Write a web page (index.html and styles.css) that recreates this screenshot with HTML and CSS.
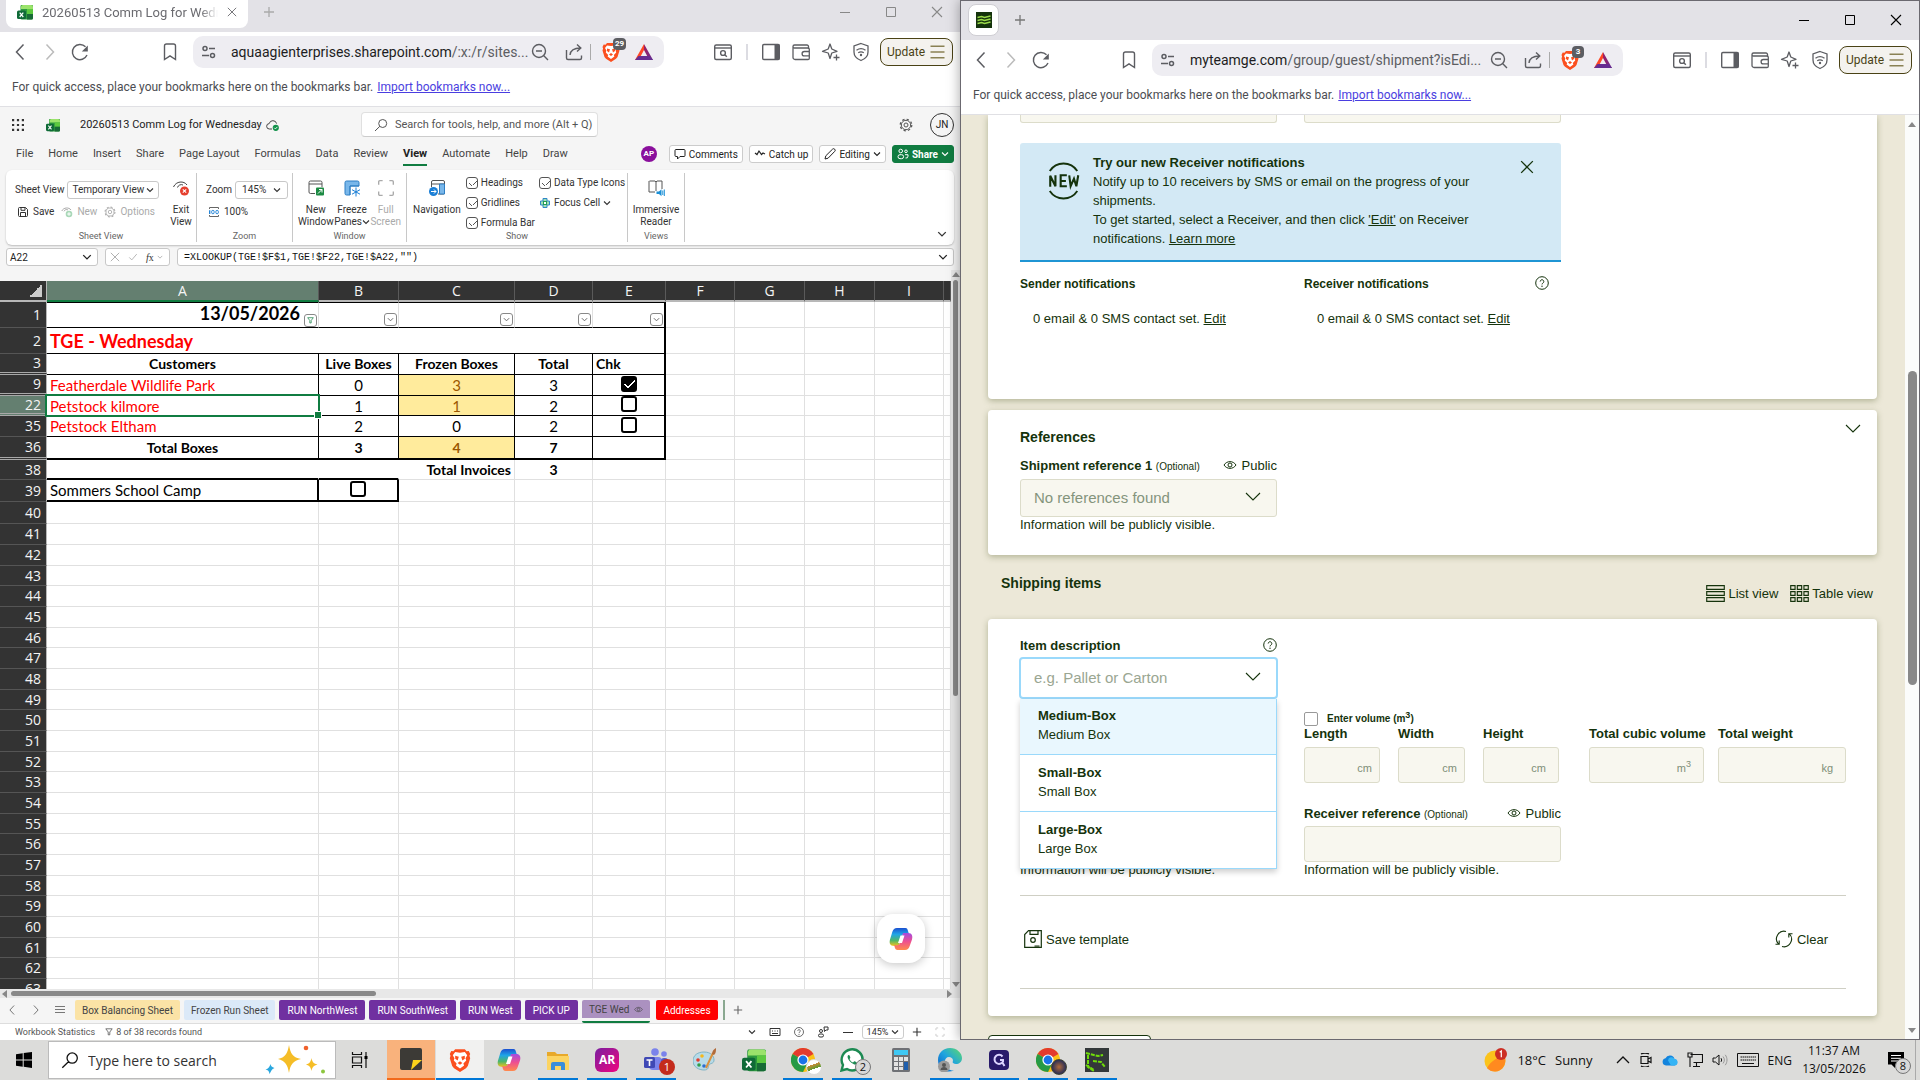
FILE: index.html
```html
<!DOCTYPE html>
<html lang="en">
<head>
<meta charset="utf-8">
<title>Desktop</title>
<link rel="stylesheet" href="styles.css">
</head>
<body>
<svg class="defs" aria-hidden="true">
  <defs>
    <linearGradient id="g-blue" x1="0" y1="0" x2="0" y2="1"><stop offset="0" stop-color="#1b4fd0"/><stop offset=".35" stop-color="#1fa5e8"/><stop offset=".7" stop-color="#4fb768"/><stop offset="1" stop-color="#f5c21b"/></linearGradient>
    <linearGradient id="g-pink" x1="0" y1="0" x2="0" y2="1"><stop offset="0" stop-color="#a34be0"/><stop offset=".5" stop-color="#ee5090"/><stop offset="1" stop-color="#ff8a4c"/></linearGradient>
    <linearGradient id="g-edge" x1="0" y1="1" x2="1" y2="0"><stop offset="0" stop-color="#0b57c2"/><stop offset=".5" stop-color="#1fa4e0"/><stop offset="1" stop-color="#5edb6a"/></linearGradient>
    <linearGradient id="g-bat" x1="0" y1="0" x2="1" y2="0"><stop offset="0" stop-color="#ff4724"/><stop offset=".5" stop-color="#ff4724"/><stop offset=".5" stop-color="#9e1f63"/><stop offset="1" stop-color="#662d91"/></linearGradient>
  </defs>
  <symbol id="i-excel" viewBox="0 0 16 16"><path d="M4 1h11a1 1 0 0 1 1 1v12a1.500 1.500 0 0 1-1.500 1.500H5A1.500 1.500 0 0 1 3.500 14V2z" fill="#2d9a3f"/><path d="M4 3a2 2 0 0 1 2-2h8a2 2 0 0 1 2 2v2H4z" fill="#9be36b"/><path d="M10 5h6v5h-6z" fill="#5cc93f"/><path d="M10 10h6v4a1.500 1.500 0 0 1-1.500 1.500H10z" fill="#176b36"/><rect y="6.500" width="9" height="8.500" rx="1.500" fill="#0f6a37"/><path d="M2.700 8.700l3.600 4.300M6.300 8.700L2.700 13" stroke="#fff" stroke-width="1.200"/></symbol>
  <symbol id="i-close" viewBox="0 0 12 12"><path d="M1 1l10 10M11 1L1 11" fill="none" stroke="currentColor" stroke-width="1.100"/></symbol>
  <symbol id="i-plus" viewBox="0 0 12 12"><path d="M6 1v10M1 6h10" fill="none" stroke="currentColor" stroke-width="1.300"/></symbol>
  <symbol id="i-minus" viewBox="0 0 12 12"><path d="M1 6.500h10" fill="none" stroke="currentColor" stroke-width="1"/></symbol>
  <symbol id="i-max" viewBox="0 0 12 12"><path d="M1.500 1.500h9v9h-9z" fill="none" stroke="currentColor" stroke-width="1"/></symbol>
  <symbol id="i-back" viewBox="0 0 20 20"><path d="M13.500 2.500L6.500 10l7 7.500" fill="none" stroke="currentColor" stroke-width="1.500"/></symbol>
  <symbol id="i-fwd" viewBox="0 0 20 20"><path d="M6.500 2.500l7 7.500-7 7.500" fill="none" stroke="currentColor" stroke-width="1.500"/></symbol>
  <symbol id="i-reload" viewBox="0 0 20 20"><path d="M15.500 4.800A7.600 7.600 0 1 0 17 13" fill="none" stroke="currentColor" stroke-width="1.400"/><path d="M17.800 3.500v6h-6z" fill="currentColor"/></symbol>
  <symbol id="i-bookmark" viewBox="0 0 20 20"><path d="M4.500 4a2 2 0 0 1 2-2h7a2 2 0 0 1 2 2v13.500L10 13.800l-5.500 3.700z" fill="none" stroke="currentColor" stroke-width="1.400"/></symbol>
  <symbol id="i-tune" viewBox="0 0 20 20"><g fill="none" stroke="currentColor" stroke-width="1.500"><circle cx="6" cy="6.500" r="2"/><path d="M10 6.500h6M3 13.500h7"/><circle cx="13.500" cy="13.500" r="2"/></g></symbol>
  <symbol id="i-zoomout" viewBox="0 0 20 20"><g fill="none" stroke="currentColor" stroke-width="1.400"><circle cx="9" cy="9" r="6.500"/><path d="M13.800 13.800L18 18M6 9h6"/></g></symbol>
  <symbol id="i-share" viewBox="0 0 20 20"><path d="M2.500 8v8a1.500 1.500 0 0 0 1.500 1.500h12a1.500 1.500 0 0 0 1.500-1.500v-2.500M6 13c.5-4.500 4-7 10.500-7M13 2.500L16.800 6 13 9.500" fill="none" stroke="currentColor" stroke-width="1.400"/></symbol>
  <symbol id="i-brave" viewBox="0 0 20 20"><path d="M6 1h8l1.500 1.700 1.800-.2 1.200 2.500-.6 1.500.6 2-2 6.500-1.500 1.800L10 20l-5-3.200-1.500-1.800-2-6.500.6-2L1.500 5l1.200-2.500 1.800.2z" fill="#fb4f1f"/><path d="M10 4l4-.6 2 2.600-1.400 2.600.6 1.800-2.400 2.600.6 1.500L10 17l-3.400-2.500.6-1.500-2.400-2.600.6-1.800L4 6l2-2.600z" fill="#fff"/><path d="M6 6.500l3 .7-1 3.300-2-1.500zM14 6.500l-3 .7 1 3.300 2-1.500zM10 11l2 1.500-2 1.500-2-1.500z" fill="#fb4f1f"/></symbol>
  <symbol id="i-bat" viewBox="0 0 20 20"><path d="M10 2L1 18h18zM10 8l3.200 6H6.800z" fill="url(#g-bat)" fill-rule="evenodd"/><path d="M1 18l3.500-4h11L19 18z" fill="#662d91"/></symbol>
  <symbol id="i-winsearch" viewBox="0 0 20 20"><g fill="none" stroke="currentColor" stroke-width="1.400"><rect x="1.700" y="3" width="16.600" height="14.500" rx="1.500"/><path d="M1.700 6h16.600"/><circle cx="10" cy="11" r="2.400"/><path d="M11.800 12.800l2 2"/></g></symbol>
  <symbol id="i-sidebar" viewBox="0 0 20 20"><rect x="1.700" y="2.500" width="16.600" height="15" rx="1.200" fill="none" stroke="currentColor" stroke-width="1.400"/><path d="M13.500 2.500h5v15h-5z" fill="currentColor"/></symbol>
  <symbol id="i-wallet" viewBox="0 0 20 20"><path d="M17.500 7V4.500A1.500 1.500 0 0 0 16 3H3.500a1.500 1.500 0 0 0 0 3H17a1.300 1.300 0 0 1 1.300 1.300v8.900A1.300 1.300 0 0 1 17 17.500H4a2 2 0 0 1-2-2v-11M18.300 9.500h-5a2.200 2.200 0 0 0 0 4.400h5" fill="none" stroke="currentColor" stroke-width="1.300"/></symbol>
  <symbol id="i-sparkle" viewBox="0 0 20 20"><path d="M9 2l1.800 5L16 9.300 10.800 11 9 16.500 7.200 11 1.500 9.300 7.200 7zM15.500 12.500v6M12.500 15.500h6" fill="none" stroke="currentColor" stroke-width="1.300" stroke-linejoin="round"/></symbol>
  <symbol id="i-vpn" viewBox="0 0 20 20"><path d="M10 1.500l7 2.500v6c0 4-3 7-7 8.500C6 17 3 14 3 10V4zM5.500 8.200c2.800-2 6.200-2 9 0M7.200 10.800c1.800-1.200 3.800-1.200 5.600 0" fill="none" stroke="currentColor" stroke-width="1.300"/><circle cx="10" cy="13" r="1.200" fill="currentColor"/></symbol>
  <symbol id="i-burger" viewBox="0 0 18 16"><path d="M1 1.500h16M1 8h16M1 14.500h16" stroke="#8a8154" stroke-width="1.700"/></symbol>
  <symbol id="i-waffle" viewBox="0 0 12 12"><path d="M0 0h2.200v2.200H0zM4.900 0h2.200v2.200H4.900zM9.800 0H12v2.200H9.800zM0 4.900h2.200v2.200H0zM4.900 4.900h2.200v2.200H4.900zM9.800 4.900H12v2.200H9.800zM0 9.800h2.200V12H0zM4.900 9.800h2.200V12H4.900zM9.800 9.800H12V12H9.800z" fill="#333"/></symbol>
  <symbol id="i-cloud" viewBox="0 0 14 14"><path d="M6 11H3.500a2.700 2.700 0 0 1-.3-5.400 3.800 3.800 0 0 1 7.400 0" fill="none" stroke="#444"/><circle cx="9.800" cy="9.800" r="3.100" fill="#13924b"/><path d="M8.300 9.800l1.100 1.100 2-2" fill="none" stroke="#fff" stroke-width=".9"/></symbol>
  <symbol id="i-search" viewBox="0 0 14 14"><path d="M8.700 1.500a4 4 0 1 1 0 8 4 4 0 0 1 0-8zM5.800 8.300L1 13" fill="none" stroke="currentColor"/></symbol>
  <symbol id="i-gear" viewBox="0 0 14 14"><g fill="none" stroke="currentColor"><circle cx="7" cy="7" r="2"/><circle cx="7" cy="7" r="4.700"/><circle cx="7" cy="7" r="5.800" stroke-dasharray="2.300 2.250" stroke-width="1.200"/></g></symbol>
  <symbol id="i-comment" viewBox="0 0 12 12"><path d="M2 1.500h8a1 1 0 0 1 1 1v5a1 1 0 0 1-1 1H6L3.500 11V8.500H2a1 1 0 0 1-1-1v-5a1 1 0 0 1 1-1z" fill="none" stroke="currentColor"/></symbol>
  <symbol id="i-wave" viewBox="0 0 12 12"><path d="M1 5l2 1.500L5 3l2.500 3.500L9 5l2 1" fill="none" stroke="currentColor" stroke-width="1.200"/></symbol>
  <symbol id="i-pen" viewBox="0 0 12 12"><path d="M1 11l.8-3.200L8.500 1.200a1.400 1.400 0 0 1 2.200 2.200L4.100 10.200z" fill="none" stroke="currentColor"/></symbol>
  <symbol id="i-people" viewBox="0 0 12 12"><g fill="none" stroke="currentColor"><circle cx="3.700" cy="3" r="1.800"/><circle cx="9" cy="3.300" r="1.300"/><rect x="1" y="6.700" width="5.600" height="4" rx="2"/><path d="M8 6.700h3v1.500a2 2 0 0 1-2.500 1.800"/></g></symbol>
  <symbol id="i-chev" viewBox="0 0 8 8"><path d="M1 2.500l3 3 3-3" fill="none" stroke="currentColor" stroke-width="1.100"/></symbol>
  <symbol id="i-chev-thin" viewBox="0 0 18 18"><path d="M2 5l7 7L16 5" fill="none" stroke="currentColor" stroke-width="1.100"/></symbol>
  <symbol id="i-save" viewBox="0 0 12 12"><path d="M1.500 2.500a1 1 0 0 1 1-1h6l2 2v6a1 1 0 0 1-1 1h-7a1 1 0 0 1-1-1zM4 1.500v2.800h4V1.500M3.500 10.500V6.500h5v4" fill="none" stroke="currentColor"/></symbol>
  <symbol id="i-neweye" viewBox="0 0 12 12"><path d="M.8 5C2.500 1.300 8 1 10 4M3 5.300A2.700 2.700 0 0 1 7 4" fill="none" stroke="#aaa"/><circle cx="8" cy="8" r="3.300" fill="#a9d8b8"/><path d="M8 6.200v3.600M6.200 8h3.600" stroke="#fff"/></symbol>
  <symbol id="i-exit" viewBox="0 0 18 18"><path d="M1.500 8C4 2 12 1.500 15 6M5.500 8.500A4 4 0 0 1 11 6" fill="none" stroke="#444"/><circle cx="12.500" cy="12" r="4.500" fill="#e5402f"/><path d="M10.800 10.300l3.400 3.400M14.200 10.300l-3.400 3.400" stroke="#fff" stroke-width="1.100"/></symbol>
  <symbol id="i-hundred" viewBox="0 0 12 12"><path d="M1.500 3V1.500h9V3M1.500 9v1.500h9V9" fill="none" stroke="#666"/><path d="M1.700 4.200v3.800" stroke="#1b7fd6" stroke-width="1.300"/><rect x="3.700" y="4.400" width="2.400" height="3.300" rx="1" fill="none" stroke="#1b7fd6"/><rect x="7.900" y="4.400" width="2.400" height="3.300" rx="1" fill="none" stroke="#1b7fd6"/></symbol>
  <symbol id="i-newwin" viewBox="0 0 18 18"><path d="M8 14.500H3.500a1.500 1.500 0 0 1-1.500-1.500V3.500A1.500 1.500 0 0 1 3.500 2h10A1.500 1.500 0 0 1 15 3.500V8M2 5h13" fill="none" stroke="#555"/><rect x="9" y="8.500" width="8" height="8" rx="1" fill="#1c8a43"/><path d="M11 14.500l4-4M12 10.500h3v3" fill="none" stroke="#fff"/></symbol>
  <symbol id="i-freeze" viewBox="0 0 18 18"><path d="M2 3.500A1.500 1.500 0 0 1 3.500 2h11A1.500 1.500 0 0 1 16 3.500V7H7v9H3.500A1.500 1.500 0 0 1 2 14.500z" fill="#79b7ea" stroke="#2f7fc4"/><path d="M7 16V7h9" fill="none" stroke="#2f7fc4"/><path d="M13 8.500v9M9 10.700l8 4.500M17 10.700l-8 4.500" stroke="#1b7fd6"/></symbol>
  <symbol id="i-full" viewBox="0 0 16 16"><path d="M1.500 5V2.500a1 1 0 0 1 1-1H5M11 1.500h2.500a1 1 0 0 1 1 1V5M14.500 11v2.500a1 1 0 0 1-1 1H11M5 14.500H2.500a1 1 0 0 1-1-1V11" fill="none" stroke="currentColor" stroke-width="1.200"/></symbol>
  <symbol id="i-nav" viewBox="0 0 18 18"><path d="M3.500 8V3A1.500 1.500 0 0 1 5 1.500h10A1.500 1.500 0 0 1 16.500 3v11a1 1 0 0 1-1 1H10M3.500 5h13" fill="none" stroke="#555"/><path d="M11.500 5h5v10h-5z" fill="#79b7ea" stroke="#2f7fc4"/><circle cx="5.500" cy="12.500" r="4.500" fill="#1b7fd6"/><path d="M3 12.500h5M6 10.500l2 2-2 2" fill="none" stroke="#fff"/></symbol>
  <symbol id="i-focus" viewBox="0 0 12 12"><path d="M4 1.500h4V4h2.500v4H8v2.500H4V8H1.500V4H4z" fill="#9fe0b4" stroke="#2f86c8"/><rect x="4.500" y="4.500" width="3" height="3" fill="#fff" stroke="#219a55"/></symbol>
  <symbol id="i-reader" viewBox="0 0 18 18"><path d="M2.500 2H8l1 1 1-1h5v8M2 2v11h6M9 3v9" fill="none" stroke="#555"/><path d="M9.500 12.500H12l2.500-2.200v7L12 15H9.500z" fill="#1b8fd6"/><path d="M15.800 11.500v4.500M17.300 10.500v6.500" stroke="#1b8fd6"/></symbol>
  <symbol id="i-check" viewBox="0 0 12 12"><path d="M1.500 6.500l3 3 6-7" fill="none" stroke="currentColor"/></symbol>
  <symbol id="i-copilot" viewBox="0 0 24 24"><path d="M8 1h8.500c1.500 0 2 1 2.500 3l1 3h-4.500c-1.500 0-2.500 1-3 2.500L10 19H5.500C.5 19 .2 15.500 1 12.500L3.300 5C4.200 2.200 5.500 1 8 1z" fill="url(#g-blue)"/><path d="M16 23H8.500c-1.500 0-2.500-1-3-3.500V18c3 1 5 0 5.800-2.500L14 6h5c4.500 0 4.800 3.500 4 6.500L20.700 19c-.8 2.800-2.200 4-4.700 4z" fill="url(#g-pink)"/><path d="M11.500 8.500h4L13 16H9z" fill="#fff"/></symbol>
  <symbol id="i-help" viewBox="0 0 14 14"><circle cx="7" cy="7" r="6.300" fill="none" stroke="currentColor"/><path d="M5.200 5.500a1.800 1.800 0 1 1 2.700 1.600c-.6.400-.9.700-.9 1.300" fill="none" stroke="currentColor"/><circle cx="7" cy="10.200" r=".7" fill="currentColor"/></symbol>
  <symbol id="i-eye" viewBox="0 0 14 10"><path d="M1 5c2.800-4.500 9.200-4.500 12 0-2.800 4.500-9.200 4.500-12 0z" fill="none" stroke="currentColor"/><circle cx="7" cy="5" r="2" fill="none" stroke="currentColor"/></symbol>
  <symbol id="i-list" viewBox="0 0 20 18"><path d="M.7.700h18.600v4H.7zM.7 7h18.600v4H.7zM.7 13.300h18.600v4H.7z" fill="none" stroke="currentColor" stroke-width="1.200"/></symbol>
  <symbol id="i-table" viewBox="0 0 20 18"><path d="M.7.700h4.600v4H.7zM7.700.700h4.600v4H7.700zM14.700.700h4.600v4h-4.600zM.7 7h4.600v4H.7zM7.700 7h4.600v4H7.700zM14.700 7h4.600v4h-4.600zM.7 13.300h4.600v4H.7zM7.700 13.300h4.600v4H7.700zM14.700 13.300h4.600v4h-4.600z" fill="none" stroke="currentColor" stroke-width="1.200"/></symbol>
  <symbol id="i-template" viewBox="0 0 18 18"><path d="M4.500.700h12.800v16.600H.7V4.500zM6 .700v3.600h8V.700M10.500 16h5" fill="none" stroke="currentColor" stroke-width="1.200"/><circle cx="9" cy="10" r="2.300" fill="none" stroke="currentColor" stroke-width="1.200"/></symbol>
  <symbol id="i-refresh" viewBox="0 0 18 18"><path d="M11 1.500A7.600 7.600 0 0 0 3.500 14M7 16.500A7.600 7.600 0 0 0 14.500 4M.5 14.300h3.700v-3.700M17.500 3.700h-3.700v3.700" fill="none" stroke="currentColor" stroke-width="1.100"/></symbol>
  <symbol id="i-keyboard" viewBox="0 0 22 14"><path d="M.5.500h21v13H.5zM3 4h16M3 7h16M5 10.500h12" fill="none" stroke="currentColor"/><path d="M3 4h16M3 7h16" stroke="#dcdcda" stroke-dasharray="1 1"/></symbol>
  <symbol id="i-kbd-s" viewBox="0 0 12 12"><path d="M1 2.500h10v7H1zM3 5h1M5.500 5h1M8 5h1M3 7.500h6" fill="none" stroke="currentColor"/></symbol>
  <symbol id="i-feedback" viewBox="0 0 12 12"><path d="M7 1h4v3H9L7.500 5.500z" fill="none" stroke="currentColor"/><circle cx="4" cy="5" r="1.500" fill="none" stroke="currentColor"/><rect x="1.500" y="8" width="5" height="3" rx="1.500" fill="none" stroke="currentColor"/></symbol>
  <symbol id="i-funnel" viewBox="0 0 10 10"><path d="M1 1h8L6 5v3.500H4V5z" fill="none" stroke="currentColor"/></symbol>
  <symbol id="i-chrome" viewBox="0 0 24 24"><circle cx="12" cy="12" r="12" fill="#fbc116"/><path d="M12 12L1.600 6A12 12 0 0 1 22.400 6z" fill="#e33b2e"/><path d="M12 12L1.600 6A12 12 0 0 0 12 24l4-8z" fill="#269a45"/><circle cx="12" cy="12" r="5.600" fill="#fff"/><circle cx="12" cy="12" r="4.400" fill="#1a73e8"/></symbol>
</svg>

<div class="screen">
<main class="desktop">

<section class="window window-left" aria-label="Workbook">
  <header class="tabstrip">
    <div class="tab"><svg class="s16"><use href="#i-excel"/></svg><span class="tab-title">20260513 Comm Log for Wednesday</span><button class="tab-close" aria-label="Close tab"><svg class="s10"><use href="#i-close"/></svg></button></div>
    <button class="new-tab" aria-label="New tab"><svg class="s12"><use href="#i-plus"/></svg></button>
    <div class="win-controls"><button aria-label="Minimize"><svg class="s12"><use href="#i-minus"/></svg></button><button aria-label="Maximize"><svg class="s12"><use href="#i-max"/></svg></button><button aria-label="Close"><svg class="s12"><use href="#i-close"/></svg></button></div>
  </header>
  <nav class="toolbar">
    <button class="nav-btn" aria-label="Back"><svg class="s20"><use href="#i-back"/></svg></button>
    <button class="nav-btn off" aria-label="Forward"><svg class="s20"><use href="#i-fwd"/></svg></button>
    <button class="nav-btn" aria-label="Reload"><svg class="s20"><use href="#i-reload"/></svg></button>
    <button class="nav-btn mark" aria-label="Bookmark"><svg class="s20"><use href="#i-bookmark"/></svg></button>
    <div class="address">
      <svg class="s20"><use href="#i-tune"/></svg>
      <div class="url" role="textbox" aria-label="Address">aquaagienterprises.sharepoint.com<span>/:x:/r/sites...</span></div>
      <svg class="s20"><use href="#i-zoomout"/></svg><svg class="s20 share"><use href="#i-share"/></svg><i class="vr"></i>
      <span class="shield"><svg class="s20"><use href="#i-brave"/></svg><b>29</b></span><svg class="s20"><use href="#i-bat"/></svg>
    </div>
    <svg class="s20"><use href="#i-winsearch"/></svg><i class="bar-sep"></i>
    <div class="panel-icons"><svg class="s20"><use href="#i-sidebar"/></svg><svg class="s20"><use href="#i-wallet"/></svg><svg class="s20"><use href="#i-sparkle"/></svg><svg class="s20"><use href="#i-vpn"/></svg></div>
    <button class="update">Update<svg><use href="#i-burger"/></svg></button>
  </nav>
  <div class="bookmarks"><span>For quick access, place your bookmarks here on the bookmarks bar.</span><a href="#">Import bookmarks now...</a></div>

  <div class="excel">
    <div class="xl-head">
      <svg class="s12"><use href="#i-waffle"/></svg><svg class="s14 xl-logo"><use href="#i-excel"/></svg>
      <span class="xl-title">20260513 Comm Log for Wednesday</span><svg class="s14"><use href="#i-cloud"/></svg>
      <label class="xl-search"><svg class="s14"><use href="#i-search"/></svg><input type="text" aria-label="Search" placeholder="Search for tools, help, and more (Alt + Q)"></label>
      <svg class="s14 xl-gear"><use href="#i-gear"/></svg><span class="xl-user">JN</span>
    </div>
    <div class="xl-tabs">
      <button>File</button><button>Home</button><button>Insert</button><button>Share</button><button>Page Layout</button><button>Formulas</button><button>Data</button><button>Review</button><button class="on">View</button><button>Automate</button><button>Help</button><button>Draw</button>
      <div class="xl-actions"><span class="presence">AP</span><button class="act"><svg class="s12"><use href="#i-comment"/></svg>Comments</button><button class="act"><svg class="s12"><use href="#i-wave"/></svg>Catch up</button><button class="act"><svg class="s12"><use href="#i-pen"/></svg>Editing<svg class="s8"><use href="#i-chev"/></svg></button><button class="act green"><svg class="s12"><use href="#i-people"/></svg>Share<svg class="s8"><use href="#i-chev"/></svg></button></div>
    </div>
    <div class="ribbon">
      <section class="grp grp-view">
        <div class="grp-body">
          <div class="stack">
            <div class="line"><span id="sv">Sheet View</span><button class="combo wide" aria-labelledby="sv">Temporary View<svg class="s8"><use href="#i-chev"/></svg></button></div>
            <div class="line cmds"><button><svg class="s12"><use href="#i-save"/></svg>Save</button><button class="dim"><svg class="s12"><use href="#i-neweye"/></svg>New</button><button class="dim"><svg class="s12"><use href="#i-gear"/></svg>Options</button></div>
          </div>
          <button class="big"><svg class="s18"><use href="#i-exit"/></svg>Exit<br>View</button>
        </div><h3>Sheet View</h3>
      </section>
      <section class="grp grp-zoom">
        <div class="grp-body"><div class="stack">
          <div class="line"><span id="zm">Zoom</span><button class="combo" aria-labelledby="zm">145%<svg class="s8"><use href="#i-chev"/></svg></button></div>
          <div class="line cmds"><button><svg class="s12"><use href="#i-hundred"/></svg>100%</button></div>
        </div></div><h3>Zoom</h3>
      </section>
      <section class="grp grp-window">
        <div class="grp-body"><button class="big"><svg class="s18"><use href="#i-newwin"/></svg>New<br>Window</button><button class="big"><svg class="s18"><use href="#i-freeze"/></svg>Freeze<span class="with-chev">Panes<svg class="s8"><use href="#i-chev"/></svg></span></button><button class="big dim"><svg class="s18"><use href="#i-full"/></svg>Full<br>Screen</button></div><h3>Window</h3>
      </section>
      <section class="grp grp-show">
        <div class="grp-body">
          <button class="big"><svg class="s18"><use href="#i-nav"/></svg>Navigation</button>
          <div class="checks"><label><input type="checkbox" checked>Headings</label><label><input type="checkbox" checked>Gridlines</label><label><input type="checkbox" checked>Formula Bar</label></div>
          <div class="checks"><label><input type="checkbox" checked>Data Type Icons</label><button><svg class="s12"><use href="#i-focus"/></svg>Focus Cell<svg class="s8"><use href="#i-chev"/></svg></button></div>
        </div><h3>Show</h3>
      </section>
      <section class="grp grp-reader">
        <div class="grp-body"><button class="big"><svg class="s18"><use href="#i-reader"/></svg>Immersive<br>Reader</button></div><h3>Views</h3>
      </section>
      <button class="collapse" aria-label="Collapse ribbon"><svg class="s10"><use href="#i-chev"/></svg></button>
    </div>
    <div class="formula-row">
      <button class="namebox">A22<svg class="s10"><use href="#i-chev"/></svg></button>
      <div class="fx"><svg class="s12"><use href="#i-close"/></svg><svg class="s12"><use href="#i-check"/></svg><span><i>f</i>x</span><svg class="s8"><use href="#i-chev"/></svg></div>
      <label class="formula"><input type="text" aria-label="Formula" value='=XLOOKUP(TGE!$F$1,TGE!$F22,TGE!$A22,"")'><svg class="s10"><use href="#i-chev"/></svg></label>
    </div>

    <div class="sheet">
      <div class="cells">
        <table>
          <colgroup><col class="c-n"><col class="c-a"><col class="c-b"><col class="c-c"><col class="c-d"><col class="c-e"><col class="c-f"><col class="c-g"><col class="c-g"><col class="c-f"><col></colgroup>
          <thead><tr><th class="corner"></th><th class="sel">A</th><th>B</th><th>C</th><th>D</th><th>E</th><th>F</th><th>G</th><th>H</th><th>I</th><th></th></tr></thead>
          <tbody>
          <tr class="h26 top"><th>1</th><td class="k date">13/05/2026<button class="filter on" aria-label="Filter A"><svg><use href="#i-funnel"/></svg></button></td><td class="k flt"><button class="filter" aria-label="Filter B"><svg><use href="#i-chev"/></svg></button></td><td class="k flt"><button class="filter" aria-label="Filter C"><svg><use href="#i-chev"/></svg></button></td><td class="k flt"><button class="filter" aria-label="Filter D"><svg><use href="#i-chev"/></svg></button></td><td class="k end flt"><button class="filter" aria-label="Filter E"><svg><use href="#i-chev"/></svg></button></td><td><td><td><td><td></tr>
          <tr class="h26"><th>2</th><td class="k end title" colspan="5">TGE - Wednesday</td><td><td><td><td><td></tr>
          <tr class="h21 box b"><th class="gap">3</th><td class="k">Customers</td><td class="k">Live Boxes</td><td class="k">Frozen Boxes</td><td class="k">Total</td><td class="k end left">Chk</td><td><td><td><td><td></tr>
          <tr class="h21 box"><th class="gap">9</th><td class="k name">Featherdale Wildlife Park</td><td class="k">0</td><td class="k hot">3</td><td class="k">3</td><td class="k end"><input type="checkbox" aria-label="Featherdale done" checked></td><td><td><td><td><td></tr>
          <tr class="h20 box"><th class="gap sel">22</th><td class="k name active">Petstock kilmore</td><td class="k">1</td><td class="k hot">1</td><td class="k">2</td><td class="k end"><input type="checkbox" aria-label="Kilmore done"></td><td><td><td><td><td></tr>
          <tr class="h21 box"><th>35</th><td class="k name">Petstock Eltham</td><td class="k">2</td><td class="k">0</td><td class="k">2</td><td class="k end"><input type="checkbox" aria-label="Eltham done"></td><td><td><td><td><td></tr>
          <tr class="h23 box b thick"><th class="gap">36</th><td class="k">Total Boxes</td><td class="k">3</td><td class="k hot">4</td><td class="k">7</td><td class="k end"></td><td><td><td><td><td></tr>
          <tr class="h20 b plain"><th>38</th><td class="clear thickb"></td><td class="clear thickb"></td><td class="right">Total Invoices</td><td>3</td><td><td><td><td><td><td></tr>
          <tr class="h22 camp"><th>39</th><td class="k left">Sommers School Camp</td><td class="k"><input type="checkbox" aria-label="Camp done"></td><td><td><td><td><td><td><td><td></tr>
          <tr class="h22"><th>40</th><td><td><td><td><td><td><td><td><td><td></tr>
          </tbody>
          <tbody class="blank">
          <tr><th>41</th><td><td><td><td><td><td><td><td><td><td></tr>
          <tr><th>42</th><td><td><td><td><td><td><td><td><td><td></tr>
          <tr><th>43</th><td><td><td><td><td><td><td><td><td><td></tr>
          <tr><th>44</th><td><td><td><td><td><td><td><td><td><td></tr>
          <tr><th>45</th><td><td><td><td><td><td><td><td><td><td></tr>
          <tr><th>46</th><td><td><td><td><td><td><td><td><td><td></tr>
          <tr><th>47</th><td><td><td><td><td><td><td><td><td><td></tr>
          <tr><th>48</th><td><td><td><td><td><td><td><td><td><td></tr>
          <tr><th>49</th><td><td><td><td><td><td><td><td><td><td></tr>
          <tr><th>50</th><td><td><td><td><td><td><td><td><td><td></tr>
          <tr><th>51</th><td><td><td><td><td><td><td><td><td><td></tr>
          <tr><th>52</th><td><td><td><td><td><td><td><td><td><td></tr>
          <tr><th>53</th><td><td><td><td><td><td><td><td><td><td></tr>
          <tr><th>54</th><td><td><td><td><td><td><td><td><td><td></tr>
          <tr><th>55</th><td><td><td><td><td><td><td><td><td><td></tr>
          <tr><th>56</th><td><td><td><td><td><td><td><td><td><td></tr>
          <tr><th>57</th><td><td><td><td><td><td><td><td><td><td></tr>
          <tr><th>58</th><td><td><td><td><td><td><td><td><td><td></tr>
          <tr><th>59</th><td><td><td><td><td><td><td><td><td><td></tr>
          <tr><th>60</th><td><td><td><td><td><td><td><td><td><td></tr>
          <tr><th>61</th><td><td><td><td><td><td><td><td><td><td></tr>
          <tr><th>62</th><td><td><td><td><td><td><td><td><td><td></tr>
          <tr><th>63</th><td><td><td><td><td><td><td><td><td><td></tr>
          </tbody>
        </table>
      </div>
      <div class="vscroll"><i class="arr up"></i><i class="thumb"></i><i class="rest"></i><i class="arr down"></i></div>
      <button class="fab" aria-label="Copilot"><svg class="s24"><use href="#i-copilot"/></svg></button>
    </div>
    <div class="hscroll"><i class="arr lt"></i><i class="thumb"></i><i class="rest"></i><i class="arr rt"></i></div>
    <div class="sheetbar">
      <button class="mini" aria-label="Previous sheet"><svg class="s12"><use href="#i-back"/></svg></button><button class="mini" aria-label="Next sheet"><svg class="s12"><use href="#i-fwd"/></svg></button><button class="mini" aria-label="All sheets"><svg class="s10" viewBox="0 0 10 10"><path d="M0 1.500h10M0 4.500h10M0 7.500h10" stroke="#777"/></svg></button>
      <div class="stabs"><button class="st sand">Box Balancing Sheet</button><button class="st sky">Frozen Run Sheet</button><button class="st purple">RUN NorthWest</button><button class="st purple">RUN SouthWest</button><button class="st purple">RUN West</button><button class="st purple">PICK UP</button><button class="st current">TGE Wed<svg><use href="#i-eye"/></svg></button><button class="st red">Addresses</button></div>
      <button class="mini add" aria-label="Add sheet"><svg class="s10"><use href="#i-plus"/></svg></button>
    </div>
    <footer class="status">
      <span>Workbook Statistics</span><svg class="s8"><use href="#i-funnel"/></svg><span>8 of 38 records found</span>
      <div class="status-right"><svg class="s8"><use href="#i-chev"/></svg><svg class="s12"><use href="#i-kbd-s"/></svg><svg class="s10"><use href="#i-help"/></svg><svg class="s12"><use href="#i-feedback"/></svg><svg class="s12"><use href="#i-minus"/></svg><button class="pct">145%<svg class="s8"><use href="#i-chev"/></svg></button><svg class="s10"><use href="#i-plus"/></svg><span class="fit"><svg class="s10"><use href="#i-full"/></svg></span></div>
    </footer>
  </div>
</section>

<section class="window window-right" aria-label="Shipment">
  <header class="tabstrip">
    <div class="tab pinned"><svg class="s16" viewBox="0 0 16 16"><path d="M0 0h16v16H0z" fill="#15330c"/><path d="M1.500 5.500l4-1 3 1 6-1.500M1.500 8.500l4-1 3 1 6-1.500M1.500 11.500l4-1 3 1 6-1.500" fill="none" stroke="#9bdc4a" stroke-width="1.500"/></svg></div>
    <button class="new-tab" aria-label="New tab"><svg class="s12"><use href="#i-plus"/></svg></button>
    <div class="win-controls"><button aria-label="Minimize"><svg class="s12"><use href="#i-minus"/></svg></button><button aria-label="Maximize"><svg class="s12"><use href="#i-max"/></svg></button><button aria-label="Close"><svg class="s12"><use href="#i-close"/></svg></button></div>
  </header>
  <nav class="toolbar">
    <button class="nav-btn" aria-label="Back"><svg class="s20"><use href="#i-back"/></svg></button>
    <button class="nav-btn off" aria-label="Forward"><svg class="s20"><use href="#i-fwd"/></svg></button>
    <button class="nav-btn" aria-label="Reload"><svg class="s20"><use href="#i-reload"/></svg></button>
    <button class="nav-btn mark" aria-label="Bookmark"><svg class="s20"><use href="#i-bookmark"/></svg></button>
    <div class="address">
      <svg class="s20"><use href="#i-tune"/></svg>
      <div class="url" role="textbox" aria-label="Address">myteamge.com<span>/group/guest/shipment?isEdi...</span></div>
      <svg class="s20"><use href="#i-zoomout"/></svg><svg class="s20 share"><use href="#i-share"/></svg><i class="vr"></i>
      <span class="shield"><svg class="s20"><use href="#i-brave"/></svg><b>3</b></span><svg class="s20"><use href="#i-bat"/></svg>
    </div>
    <svg class="s20"><use href="#i-winsearch"/></svg><i class="bar-sep"></i>
    <div class="panel-icons"><svg class="s20"><use href="#i-sidebar"/></svg><svg class="s20"><use href="#i-wallet"/></svg><svg class="s20"><use href="#i-sparkle"/></svg><svg class="s20"><use href="#i-vpn"/></svg></div>
    <button class="update">Update<svg><use href="#i-burger"/></svg></button>
  </nav>
  <div class="bookmarks"><span>For quick access, place your bookmarks here on the bookmarks bar.</span><a href="#">Import bookmarks now...</a></div>

  <div class="viewport">
    <div class="page">
      <section class="card card-notify">
        <div class="two"><i class="cut"></i><i class="cut"></i></div>
        <div class="banner">
          <svg class="new" viewBox="0 0 34 40"><path d="M2 9.500C9-1 24-1 31 9.500M2 30.500C9 41 24 41 31 30.500" fill="none" stroke="#15330c" stroke-width="2"/><path d="M2.500 26V14.500l5.500 11V14M20 14h-6.500v11.500H20M14 20h5M22.500 14l1.500 11.500 3.500-8 2.500 8L32 14" fill="none" stroke="#15330c" stroke-width="2.200"/></svg>
          <div class="banner-text"><strong>Try our new Receiver notifications</strong><p>Notify up to 10 receivers by SMS or email on the progress of your shipments.</p><p>To get started, select a Receiver, and then click <a href="#">'Edit'</a> on Receiver notifications. <a href="#">Learn more</a></p></div>
          <button aria-label="Dismiss"><svg class="s14"><use href="#i-close"/></svg></button>
        </div>
        <div class="two notify">
          <div><h3>Sender notifications</h3><p>0 email &amp; 0 SMS contact set. <a href="#">Edit</a></p></div>
          <div><h3>Receiver notifications<svg class="s14"><use href="#i-help"/></svg></h3><p>0 email &amp; 0 SMS contact set. <a href="#">Edit</a></p></div>
        </div>
      </section>

      <section class="card card-refs">
        <header><h2>References</h2><button aria-label="Collapse"><svg class="s18"><use href="#i-chev-thin"/></svg></button></header>
        <div class="two"><div class="field">
          <div class="label-row"><label for="ref1">Shipment reference 1 <small>(Optional)</small></label><span class="public"><svg><use href="#i-eye"/></svg>Public</span></div>
          <div class="pick"><input id="ref1" type="text" placeholder="No references found"><svg class="s18"><use href="#i-chev-thin"/></svg></div>
          <p>Information will be publicly visible.</p>
        </div></div>
      </section>

      <div class="items-head"><h2>Shipping items</h2><div class="views"><button><svg><use href="#i-list"/></svg>List view</button><button><svg><use href="#i-table"/></svg>Table view</button></div></div>

      <section class="card card-items">
        <div class="two"><div class="field item">
          <div class="label-row"><label for="item">Item description</label><svg class="s14"><use href="#i-help"/></svg></div>
          <div class="pick focus"><input id="item" type="text" placeholder="e.g. Pallet or Carton"><svg class="s18"><use href="#i-chev-thin"/></svg></div>
          <ul class="menu" role="listbox">
            <li class="hover" role="option"><b>Medium-Box</b><span>Medium Box</span></li>
            <li role="option"><b>Small-Box</b><span>Small Box</span></li>
            <li role="option"><b>Large-Box</b><span>Large Box</span></li>
          </ul>
        </div></div>
        <div class="dims">
          <div class="dims-left">
            <div class="vol"><input id="vol" type="checkbox"><label for="vol">Enter volume (m<sup>3</sup>)</label></div>
            <div class="lwh">
              <div><label for="len">Length</label><div class="unit"><input id="len" type="text"><span>cm</span></div></div>
              <div><label for="wid">Width</label><div class="unit"><input id="wid" type="text"><span>cm</span></div></div>
              <div><label for="hei">Height</label><div class="unit far"><input id="hei" type="text"><span>cm</span></div></div>
            </div>
          </div>
          <div class="totals">
            <div><label for="tcv">Total cubic volume</label><div class="unit far"><input id="tcv" type="text"><span>m<sup>3</sup></span></div></div>
            <div><label for="twt">Total weight</label><div class="unit far"><input id="twt" type="text"><span>kg</span></div></div>
          </div>
        </div>
        <div class="two reference">
          <div class="field last"><p>Information will be publicly visible.</p></div>
          <div class="field"><div class="label-row"><label for="rref">Receiver reference <small>(Optional)</small></label><span class="public"><svg><use href="#i-eye"/></svg>Public</span></div>
          <input id="rref" class="plain-input" type="text"><p>Information will be publicly visible.</p></div>
        </div>
        <div class="actions"><button><svg class="s18"><use href="#i-template"/></svg>Save template</button><button><svg class="s18"><use href="#i-refresh"/></svg>Clear</button></div>
      </section>
      <button class="add-item" aria-label="Add item"></button>
    </div>
    <div class="vscroll big-scroll"><i class="arr up"></i><i class="gap1"></i><i class="thumb"></i><i class="rest"></i><i class="arr down"></i></div>
  </div>
</section>
</main>

<footer class="taskbar">
  <button class="start" aria-label="Start"><svg class="s16" viewBox="0 0 16 16"><path d="M0 2.300l6.700-1v6.300H0zM7.700 1.100L16 0v7.600H7.700zM0 8.500h6.700v6.300l-6.700-1zM7.700 8.500H16V16l-8.300-1.200z"/></svg></button>
  <label class="task-search"><svg class="s18"><use href="#i-search"/></svg><input type="text" aria-label="Search" placeholder="Type here to search"><svg class="stars" viewBox="0 0 60 30"><path d="M24 0c1.500 9 4 12.500 12 14-8 2-10.500 5-12 14-1.500-9-4-12-11-14 7-1.500 9.500-5 11-14zM46.500 13c.8 4 2 5.500 6 6.500-4 1-5.200 2.500-6 6.500-.8-4-2-5.500-5.500-6.500 3.500-1 4.700-2.500 5.500-6.500z" fill="#f5bd27"/><path d="M5.500 19c.2 2 1.500 3 4 4-3 1-3.500 3.500-5 6-.5-3-1.500-4-4-4.500 3-1 4-2.500 5-5.500z" fill="#2aa7df"/><circle cx="41" cy="3" r="2.300" fill="#f0612c"/><circle cx="58" cy="26.500" r="2" fill="#8cc63f"/></svg></label>
  <button class="tv" aria-label="Task view"><svg class="s18" viewBox="0 0 18 18"><path d="M1.500 1v2.500h9V1M1.500 17v-2.500h9V17M1.500 6h9v6h-9zM15 1v16" fill="none" stroke="#111" stroke-width="1.200"/><path d="M13.500 5h3v3h-3z"/></svg></button>
  <div class="apps">
    <button class="app sticky" aria-label="Sticky Notes"><svg class="s24" viewBox="0 0 24 24"><rect x="1" y="1" width="22" height="22" rx="2" fill="#3c3a36"/><path d="M12 23l2-10h9z" fill="#fbd31b"/></svg></button>
    <button class="app front open" aria-label="Brave"><svg class="s24"><use href="#i-brave"/></svg></button>
    <button class="app" aria-label="Copilot"><svg class="s24"><use href="#i-copilot"/></svg></button>
    <button class="app open" aria-label="Explorer"><svg class="s24" viewBox="0 0 24 24"><path d="M1 4h8l2 2h11v16H1z" fill="#e8a92a"/><path d="M1 8h22v14H1z" fill="#fcd462"/><path d="M5 22v-6a2 2 0 0 1 2-2h10a2 2 0 0 1 2 2v6h-4v-4H9v4z" fill="#3a8edb"/></svg></button>
    <button class="app open" aria-label="AR"><span class="ar">AR</span></button>
    <button class="app open" aria-label="Teams"><svg class="s24" viewBox="0 0 24 24"><circle cx="11" cy="4" r="3.800" fill="#7b83eb"/><circle cx="20" cy="6" r="2.800" fill="#7b83eb"/><rect x="5" y="9" width="13" height="13" rx="4" fill="#7b83eb"/><rect x="17" y="10" width="7" height="10" rx="3" fill="#5059c9"/><rect y="9" width="11" height="11" rx="1.500" fill="#4049b5"/><path d="M2.500 12h6M5.500 12v6" stroke="#fff" stroke-width="1.600"/></svg><b class="badge redb">1</b></button>
    <button class="app" aria-label="Paint"><svg class="s24" viewBox="0 0 24 24"><path d="M11 4c7 0 10 4 10 8s-4 3-5 5 0 5-5 5S0 19 0 13s5-9 11-9z" fill="#b7dbe8" stroke="#7fb4c6"/><circle cx="5" cy="12" r="1.800" fill="#e23b2e"/><circle cx="9" cy="8" r="1.800" fill="#f5b81c"/><circle cx="6" cy="17" r="1.800" fill="#2f9e49"/><circle cx="11" cy="18" r="1.800" fill="#2a6fd0"/><path d="M20 5l-7 15" stroke="#d9913d" stroke-width="2"/><path d="M19 6c0-3 2-5 4-6 0 3 0 5-2 7z" fill="#b26b3a"/></svg></button>
    <button class="app" aria-label="Excel"><svg class="s24"><use href="#i-excel"/></svg></button>
    <button class="app open" aria-label="Chrome"><svg class="s24"><use href="#i-chrome"/></svg><b class="badge burger"></b></button>
    <button class="app open" aria-label="WhatsApp"><svg class="s24" viewBox="0 0 24 24"><path d="M1.500 22.500L3 17A10.500 10.500 0 1 1 7 21z" fill="#fff" stroke="#1c8a52" stroke-width="2.400"/><path d="M8.500 7c-2 1-.5 4.500 2 7s6 3.500 6.500 1.500c.3-1-2.500-2.600-3-2l-1 1c-1.500-.5-3-2-3.500-3.500l.8-1C10.500 9 9.500 6.500 8.500 7z" fill="#1c8a52"/></svg><b class="badge">2</b></button>
    <button class="app" aria-label="Calculator"><svg class="s24" viewBox="0 0 24 24"><rect x="3" y="0" width="18" height="24" rx="1.500" fill="#6f7175"/><path d="M5 2h14v5H5z" fill="#3fc8f4"/><path d="M5 9h4v4H5zM10 9h4v4h-4zM15 9h4v4h-4zM5 14h4v4H5zM10 14h4v4h-4zM5 19h4v3H5zM10 19h4v3h-4z" fill="#e3e3e3"/><path d="M15 14h4v8h-4z" fill="#1f5fae"/></svg></button>
    <button class="app open" aria-label="Edge"><svg class="s24" viewBox="0 0 24 24"><path d="M12 0c7 0 12 5 12 10 0 4-3 6-6 6s-4-1.500-3-3c0-3-2-4-4-4-3 0-5 3-4 7s5 7 9 6.500C8 26 0 21 0 12 0 5 5 0 12 0z" fill="url(#g-edge)"/><circle cx="6" cy="18.500" r="6" fill="#9b9b9b"/><circle cx="6" cy="17" r="2" fill="#555"/><path d="M2.500 22c0-4 7-4 7 0z" fill="#555"/></svg></button>
    <button class="app open" aria-label="G app"><svg class="s24" viewBox="0 0 24 24"><rect x="2" y="2" width="20" height="20" rx="4" fill="#281a6b"/><path d="M15.500 8.500a4.500 4.500 0 1 0 .5 5V12h-3M15 14l2.500 4" fill="none" stroke="#dcd4ff" stroke-width="2"/></svg></button>
    <button class="app open" aria-label="Chrome profile"><svg class="s24"><use href="#i-chrome"/></svg><b class="badge photo"></b></button>
    <button class="app open" aria-label="Green app"><svg class="s24" viewBox="0 0 24 24"><path d="M0 0h24v24H0z" fill="#33383a"/><path d="M1 5l12 3 5-1M3 7v12l6 4M8 13l8 1 4 5M1 17l8 5" fill="none" stroke="#6fdc0a" stroke-width="2" stroke-dasharray="4 1"/></svg></button>
  </div>
  <div class="tray">
    <button class="weather"><svg class="s24" viewBox="0 0 24 24"><circle cx="11" cy="13" r="10.500" fill="#fbc31b"/><path d="M3 20C8 12 15 8 21 9c2 8-4 15-10 14.500-3 0-6-1-8-3.500z" fill="#ff8a1f"/><circle cx="17" cy="6" r="6" fill="#cc2f24"/><path d="M15.700 4.200L17.300 3v6.200" fill="none" stroke="#fff" stroke-width="1.200"/></svg><span>18°C</span><span>Sunny</span></button>
    <svg class="s14" viewBox="0 0 14 14"><path d="M1 10l6-6 6 6" fill="none" stroke="#111" stroke-width="1.300"/></svg>
    <svg class="s14" viewBox="0 0 14 14"><path d="M2 3.500h7v7H2zM9 6l3-1.500v5L9 8M2 1c2-1.300 6-1.300 8 0M2 13c2 1.300 6 1.300 8 0" fill="none" stroke="#111" stroke-width="1.200"/></svg>
    <svg class="s16" viewBox="0 0 16 16"><path d="M4 13.500a3.700 3.700 0 0 1-.5-7.300A4.800 4.800 0 0 1 12.500 7a3.300 3.300 0 0 1 0 6.500z" fill="#1384dd"/><path d="M6 8.500A3.500 3.500 0 0 1 12.500 7a3.300 3.300 0 0 1 .5 6.500H9z" fill="#35b4f5"/></svg>
    <svg class="s16" viewBox="0 0 16 16"><path d="M3.500 2.500h12v8h-9M1 1h4v4H1zM3 5v10M9.500 11v3.500M6 14.500h7" fill="none" stroke="#111" stroke-width="1.100"/></svg>
    <svg class="s16" viewBox="0 0 16 16"><path d="M1 6h2.500L7 3v10L3.500 10H1z" fill="none" stroke="#111"/><path d="M9 6.200c.8 1 .8 2.600 0 3.600" fill="none" stroke="#111"/><path d="M11 4.500c1.800 2 1.800 5 0 7M13.200 2.800c2.400 3 2.400 7.400 0 10.400" fill="none" stroke="#999"/></svg>
    <svg class="kbd"><use href="#i-keyboard"/></svg>
    <span class="lang">ENG</span>
    <time>11:37 AM<br>13/05/2026</time>
    <button class="notes" aria-label="Notifications"><svg class="s16" viewBox="0 0 16 16"><path d="M0 0h16v12.500H7V16l-3.500-3.500H0z"/><path d="M3 3.500h10M3 6.300h10M3 9h7" stroke="#fff"/></svg><b class="badge">8</b></button>
  </div>
</footer>
</div>
</body>
</html>
```

FILE: styles.css
```css
* { box-sizing: border-box; }
html, body { height: 100%; margin: 0; }
body { overflow: hidden; font-family: "Open Sans", "Noto Sans", sans-serif; font-size: 12px; color: #222; }
button { margin: 0; padding: 0; border: 0; background: none; font: inherit; color: inherit; display: inline-flex; align-items: center; justify-content: center; white-space: nowrap; }
input { margin: 0; font: inherit; color: inherit; min-width: 0; }
h2, h3, p, ul { margin: 0; padding: 0; font-size: inherit; }
svg { flex: none; display: block; }
.defs { position: absolute; width: 0; height: 0; }
.s8 { width: 8px; height: 8px; } .s10 { width: 10px; height: 10px; } .s12 { width: 12px; height: 12px; }
.s14 { width: 14px; height: 14px; } .s16 { width: 16px; height: 16px; } .s18 { width: 18px; height: 18px; }
.s20 { width: 20px; height: 20px; } .s24 { width: 24px; height: 24px; }

.screen { display: flex; flex-direction: column; height: 100vh; }
.desktop { flex: 1; min-height: 0; display: grid; grid-template-columns: 1fr 1fr; }
.window { display: flex; flex-direction: column; min-width: 0; min-height: 0; overflow: hidden; background: #fff; font-family: Roboto, "Open Sans", sans-serif; }
.window-right { position: relative; z-index: 1; border: 1px solid #6b6970; box-shadow: 0 0 12px rgba(0,0,0,.35); }

/* browser chrome */
.tabstrip { flex: none; display: flex; align-items: flex-start; height: 32px; background: #e3e2e7; padding-left: 6px; }
.tab { display: flex; align-items: center; width: 242px; height: 28px; padding: 0 10px 4px 11px; background: #fff; border-radius: 0 0 8px 8px; color: #6b6b70; }
.tab-title { flex: 1; margin: 0 8px 0 9px; overflow: hidden; white-space: nowrap; font-size: 13px; -webkit-mask-image: linear-gradient(90deg, #000 90%, transparent); mask-image: linear-gradient(90deg, #000 90%, transparent); }
.tab-close { width: 12px; height: 12px; }
.new-tab { margin: 6px 0 0 15px; color: #aaa; }
.win-controls { display: flex; margin-left: auto; color: #888; }
.win-controls button { width: 46px; height: 24px; }
.window-right .tabstrip { height: 39px; padding: 3px 0 0 7px; }
.pinned { width: 31px; height: 32px; padding: 0; justify-content: center; border: 1px solid #cfced3; border-radius: 8px; }
.window-right .new-tab { margin: 10px 0 0 15px; color: #777; }
.window-right .win-controls { margin-top: 4px; color: #000; }
.toolbar { flex: none; display: flex; align-items: center; height: 40px; padding: 0 7px 0 8px; color: #5c5d62; }
.nav-btn { width: 24px; height: 24px; margin-right: 6px; }
.nav-btn.off { color: #bbb; }
.nav-btn.mark { margin: 0 11px 0 60px; }
.window-right .mark { margin-left: 58px; }
.address { flex: 1; min-width: 0; display: flex; align-items: center; height: 32px; margin-right: 49px; padding: 0 10px 0 6px; background: #eeedf2; border-radius: 10px; }
.url { flex: 1; min-width: 0; margin: 0 0 0 12px; overflow: hidden; white-space: nowrap; font-size: 14px; color: #1d1d22; }
.url span { color: #5c5d62; }
.share { margin-left: 14px; }
.vr { width: 1px; height: 16px; margin: 0 10px 0 6px; background: #aaa; }
.shield { position: relative; margin-right: 13px; }
.shield b { position: absolute; left: 12px; top: -4px; min-width: 12px; padding: 0 2px; height: 12px; border-radius: 4px; background: #5c5d62; color: #fff; font-size: 8px; line-height: 12px; text-align: center; }
.bar-sep { width: 2px; height: 16px; margin: 0 13px; background: #dcdce2; }
.panel-icons { display: flex; gap: 10px; margin-right: 9px; }
.update { width: 73px; height: 28px; gap: 4px; border: 1px solid #4a4215; border-radius: 8px; background: #f4f2ee; color: #4a4215; font-size: 12px; }
.update svg { width: 17px; height: 14px; }
.bookmarks { flex: none; display: flex; align-items: center; gap: 4px; height: 35px; padding: 0 12px 4px; border-bottom: 1px solid #e0e0e4; white-space: nowrap; color: #4c4d52; font-size: 12px; }
.bookmarks a { color: #4a3ee0; }

/* workbook */
.excel { flex: 1; min-height: 0; display: flex; flex-direction: column; background: #f5f5f5; font-size: 11px; }
.xl-head { flex: none; display: flex; align-items: center; height: 35px; padding: 0 6px 0 12px; }
.xl-logo { margin: 0 20px 0 22px; }
.xl-title { width: 184px; margin-right: 2px; white-space: nowrap; }
.xl-search { display: flex; align-items: center; gap: 7px; width: 237px; height: 25px; margin-left: 81px; padding-left: 12px; background: #fff; border: 1px solid #e0e0e0; border-bottom-color: #ccc; border-radius: 4px; color: #555; }
.xl-search input { flex: 1; padding: 0; border: 0; background: none; }
.xl-search input::placeholder { color: #555; }
.xl-gear { margin: 0 17px 0 auto; color: #555; }
.xl-user { width: 24px; height: 24px; border: 1px solid #333; border-radius: 50%; text-align: center; line-height: 22px; font-size: 10px; }
.xl-tabs { flex: none; display: flex; gap: 15px; height: 24px; padding: 0 6px 0 16px; color: #444; }
.xl-tabs > button { border-bottom: 2px solid transparent; }
.xl-tabs > .on { border-color: #107c41; color: #222; font-weight: 700; }
.xl-actions { display: flex; align-items: center; gap: 6px; margin-left: auto; font-size: 10px; }
.presence { width: 16px; height: 16px; margin-right: 6px; border-radius: 50%; background: #8a0f9c; color: #fff; text-align: center; font-size: 8px; line-height: 16px; font-weight: 700; }
.act { height: 18px; gap: 3px; padding: 0 4px; background: #fff; border: 1px solid #ccc; border-radius: 3px; color: #222; }
.green { background: #107c41; border-color: #107c41; color: #fff; font-weight: 700; }
.ribbon { flex: none; display: flex; height: 75px; margin: 4px 6px 3px; padding: 3px 0; background: #fff; border-radius: 6px; box-shadow: 0 1px 2px #bbb; font-size: 10px; line-height: 12px; color: #333; }
.grp { display: flex; flex-direction: column; border-right: 1px solid #c8c8c8; }
.grp h3 { text-align: center; font-size: 9px; line-height: 12px; font-weight: 400; color: #666; }
.grp-body { flex: 1; display: flex; }
.grp-view { width: 191px; } .grp-zoom { width: 96px; } .grp-window { width: 114px; } .grp-show { width: 221px; } .grp-reader { width: 57px; }
.grp-view .grp-body { padding-left: 9px; gap: 7px; }
.grp-view .stack { width: 144px; }
.grp-view .big { margin: 0 auto; }
.grp-zoom .grp-body { padding-left: 9px; }
.grp-window .grp-body { justify-content: space-between; padding: 0 5px; }
.grp-show .grp-body { padding-left: 6px; }
.grp-reader .grp-body { justify-content: center; }
.stack { display: flex; flex-direction: column; gap: 4px; padding-top: 8px; }
.line { display: flex; align-items: center; justify-content: space-between; gap: 3px; height: 18px; white-space: nowrap; }
.cmds { gap: 6px; padding: 0 4px 0 2px; }
.cmds button { gap: 4px; }
.dim { color: #aaa; }
.combo { width: 53px; height: 18px; padding: 0 6px; justify-content: space-between; border: 1px solid #c8c8c8; border-radius: 3px; }
.combo.wide { width: 92px; padding: 0 4px; }
.big { flex-direction: column; justify-content: flex-start; padding-top: 6px; line-height: 12px; }
.big > svg { margin-bottom: 7px; }
.with-chev { display: flex; align-items: center; }
.checks { display: flex; flex-direction: column; align-items: flex-start; gap: 7px; padding: 3px 0 0 5px; }
.checks + .checks { padding-left: 4px; }
.checks label, .checks button { display: flex; align-items: center; gap: 3px; height: 13px; white-space: nowrap; }
.checks input { appearance: none; width: 12px; height: 12px; border: 1px solid #555; border-radius: 3px; background: linear-gradient(135deg, transparent 46%, #555 46%, #555 56%, transparent 56%) 6px 2px / 4px 6px no-repeat, linear-gradient(45deg, transparent 42%, #555 42%, #555 58%, transparent 58%) 2px 5px / 3px 3px no-repeat; }
.collapse { margin: auto 7px 3px auto; }
.formula-row { flex: none; display: flex; gap: 7px; height: 18px; margin: 0 6px; }
.namebox { width: 92px; padding: 0 5px 0 3px; justify-content: space-between; font-size: 10px; }
.namebox, .fx, .formula { background: #fff; border: 1px solid #c8c8c8; border-radius: 3px; }
.fx { display: flex; align-items: center; gap: 8px; width: 65px; padding-left: 4px; color: #aaa; font-size: 9px; }
.fx svg { width: 10px; }
.fx span { color: #333; font-family: "Liberation Serif", serif; font-size: 10px; }
.fx svg:last-child { margin-left: -5px; width: 6px; }
.formula { flex: 1; display: flex; align-items: center; padding: 0 5px 0 6px; }
.formula input { flex: 1; padding: 0; border: 0; background: none; font-family: "Liberation Mono", monospace; font-size: 10px; color: #111; }

/* grid */
.sheet { flex: 1; min-height: 0; display: flex; position: relative; margin-top: 4px; }
.cells { flex: 1; min-width: 0; overflow: hidden; padding-top: 11px; }
.cells table { width: 100%; table-layout: fixed; border-collapse: separate; border-spacing: 0; background: #fff; font-family: Lato, "Open Sans", sans-serif; font-size: 15px; line-height: 16px; color: #000; }
.c-n { width: 47px; } .c-a { width: 272px; } .c-b { width: 80px; } .c-c { width: 116px; } .c-d { width: 78px; } .c-e { width: 73px; } .c-f { width: 69px; } .c-g { width: 70px; }
.cells th { padding: 0; background: #333; color: #f4f4f4; font-family: "Open Sans", "Noto Sans", sans-serif; font-weight: 400; font-size: 14px; }
.cells thead th { height: 21px; border-right: 1px solid #5a5a5a; border-bottom: 2px solid #b8b8b8; }
.cells thead .corner { background: linear-gradient(135deg, transparent 50%, #ccc 50%) 29px 3px / 13px 13px no-repeat, #333; border-right-color: #b8b8b8; }
.cells thead .sel { background: #647f70; border-bottom-color: #107c41; }
.cells tbody th { padding-right: 5px; text-align: right; border-right: 1px solid #b8b8b8; border-bottom: 1px solid #555; }
.cells tbody th.gap { border-bottom: 3px double #a8a8a8; }
.cells tbody th.sel { background: #647f70; }
.cells td { padding: 0; text-align: center; border-right: 1px solid #e0e0e0; border-bottom: 1px solid #e0e0e0; white-space: nowrap; }
.cells .k { border-bottom-color: #000; }
.cells .end { border-right: 2px solid #000; }
.box .k { border-right-color: #000; }
.top .k { border-top: 1px solid #000; }
.thick .k { border-bottom-width: 2px; }
.b { font-weight: 700; font-size: 14px; }
.h20 { height: 20px; } .h21 { height: 21px; } .h22 { height: 22px; } .h23 { height: 23px; } .h26 { height: 26px; }
.blank tr { height: 21px; }
.blank tr:nth-child(3n) { height: 20px; }
.cells .left, .cells .name, .cells .title { text-align: left; padding-left: 3px; }
.cells .right { text-align: right; padding-right: 3px; }
.cells .name { color: #f00; }
.cells .title { color: #f00; font-size: 18px; font-weight: 700; line-height: 22px; }
.cells .date { text-align: right; padding: 0 1px; font-size: 18px; font-weight: 700; line-height: 20px; }
.cells .flt { text-align: right; vertical-align: bottom; padding: 0 1px 1px; line-height: 12px; }
.filter { width: 13px; height: 13px; margin-left: 4px; border: 1px solid #888; border-radius: 3px; background: #fff; color: #666; vertical-align: -4px; }
.flt .filter { vertical-align: bottom; }
.filter svg { width: 7px; height: 7px; }
.filter.on { color: #107c41; }
.hot { background: #ffeb9c; color: #9c5700; }
.cells .clear { border-right-color: #fff; }
.cells .thickb { border-bottom: 2px solid #000; }
.camp .k { border-right: 2px solid #000; border-bottom-width: 2px; }
.cells .active { position: relative; }
.active::before { content: ""; position: absolute; inset: -2px; border: 2px solid #107c41; }
.active::after { content: ""; position: absolute; right: -4px; bottom: -4px; width: 6px; height: 6px; background: #107c41; border: 1px solid #fff; }
.cells input { appearance: none; display: block; width: 16px; height: 16px; margin: -3px auto 0; border: 2px solid #000; border-radius: 3px; background: #fff; }
.cells input:checked { background: linear-gradient(135deg, transparent 42%, #fff 42%, #fff 58%, transparent 58%) 5px 2px / 7px 8px no-repeat, linear-gradient(45deg, transparent 40%, #fff 40%, #fff 65%, transparent 65%) 1px 6px / 4px 4px no-repeat, #000; }
.vscroll { flex: none; display: flex; flex-direction: column; align-items: center; width: 9px; background: #e8e8e8; }
.arr { flex: none; width: 0; height: 0; border: 4px solid transparent; }
.arr.up { border-top-width: 0; border-bottom-color: #888; border-bottom-width: 5px; margin: 2px 0 3px; }
.arr.down { border-bottom-width: 0; border-top-color: #888; border-top-width: 5px; margin: 2px 0; }
.arr.lt { border-left-width: 0; border-right-color: #888; border-right-width: 5px; margin: 0 4px 0 2px; }
.arr.rt { border-right-width: 0; border-left-color: #888; border-left-width: 5px; }
.vscroll .thumb { flex: 415; width: 5px; border-radius: 3px; background: #898989; }
.vscroll .rest { flex: 284; }
.fab { position: absolute; right: 35px; bottom: 26px; width: 48px; height: 49px; border-radius: 16px; background: #fff; box-shadow: 0 2px 10px rgba(0,0,0,.22); }
.hscroll { flex: none; display: flex; align-items: center; height: 9px; padding-right: 8px; background: #e8e8e8; }
.hscroll .thumb { flex: 365; height: 5px; border-radius: 3px; background: #898989; }
.hscroll .rest { flex: 570; }
.sheetbar { flex: none; display: flex; height: 26px; padding-top: 2px; border-bottom: 1px solid #ddd; }
.mini { width: 24px; height: 20px; color: #666; }
.mini.add { width: 28px; border-left: 2px solid #8aa890; margin-left: 5px; }
.stabs { display: flex; align-items: flex-start; gap: 4px; padding-left: 3px; }
.st { height: 20px; padding: 0 7px; border-radius: 2px; font-size: 10px; }
.sand { background: #fbe3a6; color: #444; } .sky { background: #dbe9f8; color: #444; }
.purple { padding: 0 8px; background: #7030a0; color: #fff; }
.red { background: #f00; color: #fff; margin-left: 2px; }
.current { height: 23px; gap: 5px; border-bottom: 2px solid #107c41; background: linear-gradient(#ab91c0 18px, #f5f5f5 18px); color: #444; padding-bottom: 3px; }
.current svg { width: 9px; height: 7px; }
.status { flex: none; display: flex; align-items: center; gap: 3px; height: 16px; padding: 0 0 0 15px; background: #fff; font-size: 9px; color: #555; }
.status span + svg { margin-left: 7px; }
.status-right { display: flex; align-items: center; gap: 13px; margin-left: auto; padding-right: 9px; color: #333; }
.pct { width: 42px; height: 14px; gap: 3px; border: 1px solid #ccc; border-radius: 3px; margin: 0 -5px; }
.fit { color: #bbb; margin-right: 6px; }

/* shipment page */
.viewport { flex: 1; min-height: 0; display: flex; font-family: "Liberation Sans", Arial, sans-serif; font-size: 13px; color: #15330c; overflow: hidden; }
.page { flex: 1; min-width: 0; padding: 0 28px 0 27px; background: #ece8d8; overflow: hidden; }
.page a { color: inherit; }
.card { background: #fff; border-radius: 4px; padding: 0 31px 0 32px; box-shadow: 0 2px 6px rgba(90,100,50,.4); }
.two { display: grid; grid-template-columns: 257px 257px; column-gap: 27px; }
.card-notify { height: 284px; border-radius: 0 0 4px 4px; }
.cut { height: 8px; border: 1px solid #dcdcca; border-top: 0; border-radius: 0 0 3px 3px; background: #f8f7ef; }
.banner { display: flex; align-items: flex-start; width: 541px; height: 119px; margin: 20px 0 14px; padding: 10px 27px 0; background: #d3e9f5; border-bottom: 2px solid #1f95d4; border-radius: 3px 3px 0 0; line-height: 19px; }
.new { width: 34px; height: 38px; margin: 9px 12px 0 0; }
.banner-text { flex: 0 0 390px; }
.banner strong { display: block; }
.banner button { margin: 7px 0 0 auto; }
.notify h3 { display: flex; justify-content: space-between; padding-right: 12px; font-size: 12px; line-height: 16px; font-weight: 700; }
.notify p { padding: 19px 0 0 13px; line-height: 16px; }
.card-refs { height: 145px; margin-top: 11px; padding-top: 11px; padding-right: 15px; }
.card-refs header { display: flex; justify-content: space-between; height: 36px; }
.page h2 { padding-top: 7px; font-size: 14px; line-height: 18px; font-weight: 700; }
.card-refs header button { height: 16px; }
.label-row { display: flex; align-items: center; justify-content: space-between; height: 16px; }
.label-row label, .lwh label, .totals label { font-weight: 700; }
small { font-size: 10px; font-weight: 400; }
.public { display: flex; align-items: center; gap: 5px; }
.public svg { width: 14px; height: 10px; }
.pick { display: flex; align-items: center; height: 38px; margin-top: 6px; padding: 0 14px 2px 13px; background: #f8f7ef; border: 1px solid #dcdcca; border-radius: 3px; }
.pick input { flex: 1; padding: 0; border: 0; background: none; font-size: 15px; }
.pick input::placeholder { color: #84947c; }
.field p { line-height: 16px; }
.items-head { display: flex; justify-content: space-between; height: 64px; padding: 12px 4px 0 13px; }
.views { display: flex; gap: 12px; align-items: flex-start; padding-top: 18px; }
.views button { gap: 3px; height: 16px; }
.views svg { width: 19px; height: 17px; }
.card-items { height: 397px; padding-top: 18px; }
.item { position: relative; }
.pick.focus { height: 42px; margin: 4px -1px 0; border: 2px solid #9ad9fb; background: #fff; border-radius: 4px; }
.pick.focus input::placeholder { color: #9aa692; }
.menu { position: absolute; left: 0; right: 0; top: 62px; z-index: 2; list-style: none; background: #fff; border-right: 1px solid #9ad9fb; box-shadow: 0 3px 6px rgba(0,0,0,.2); line-height: 19px; }
.menu li { height: 57px; padding: 8px 18px 0; border-bottom: 1px solid #9ad9fb; }
.menu li.hover { height: 56px; background: #e9f7fe; padding-top: 7px; }
.menu b, .menu span { display: block; }
.dims { display: flex; justify-content: space-between; padding: 12px 0 0 284px; }
.vol { display: flex; align-items: center; gap: 9px; height: 15px; font-size: 10px; font-weight: 700; }
.vol input { appearance: none; width: 14px; height: 14px; border: 1px solid #999; border-radius: 2px; background: #fff; }
sup { font-size: 9px; line-height: 0; }
.lwh, .totals { display: flex; line-height: 16px; }
.lwh { gap: 18px; } .totals { gap: 14px; padding-top: 15px; }
.lwh > div { width: 76px; } .lwh > div:nth-child(2) { width: 67px; }
.totals > div { width: 115px; } .totals > div + div { width: 128px; }
.totals label, .lwh label { display: block; white-space: nowrap; }
.unit { display: flex; align-items: center; height: 36px; margin-top: 5px; padding: 6px 7px 0; background: #f8f7ef; border: 1px solid #dcdcca; border-radius: 3px; color: #7f8f78; font-size: 11px; }
.unit.far { padding-right: 12px; }
.unit input { flex: 1; width: 10px; border: 0; background: none; }
.reference { padding: 22px 0 17px; align-items: end; }
.plain-input { display: block; width: 100%; height: 36px; margin-top: 5px; background: #f8f7ef; border: 1px solid #dcdcca; border-radius: 3px; }
.actions { display: flex; justify-content: space-between; height: 94px; padding: 34px 18px 0 4px; border-top: 1px solid #cfcfc4; border-bottom: 1px solid #cfcfc4; align-items: flex-start; }
.actions button { gap: 4px; height: 18px; }
.add-item { width: 163px; height: 36px; margin-top: 19px; background: #fff; border: 1px solid #15330c; border-radius: 4px; }
.big-scroll { width: 14px; background: #fbfcfb; }
.big-scroll .up { margin: 7px 0 3px; }
.big-scroll .down { margin: 3px 0 6px; }
.big-scroll .thumb { flex: 315; width: 9px; border-radius: 5px; }
.big-scroll .gap1 { flex: 241; }
.big-scroll .rest { flex: 340; }

/* taskbar */
.taskbar { position: relative; z-index: 2; flex: none; display: flex; align-items: center; height: 40px; background: #dcdcda; color: #111; }
.start { width: 48px; height: 40px; }
.task-search { display: flex; align-items: center; width: 288px; height: 38px; padding: 0 10px 0 12px; background: #fff; border: 1px solid #bbb; }
.task-search input { flex: 1; margin-left: 9px; padding: 0; border: 0; background: none; font-size: 14px; }
.task-search input::placeholder { color: #333; }
.stars { width: 60px; height: 30px; }
.tv { width: 48px; height: 40px; margin-right: 3px; }
.apps { display: flex; gap: 1px; }
.app { position: relative; width: 48px; height: 40px; }
.app.open::after { content: ""; position: absolute; left: 4px; right: 4px; bottom: 0; height: 2px; background: #0078d7; }
.sticky { background: #f9b27c; border-bottom: 2px solid #f26a1b; }
.front { background: #f1f1f0; }
.app.front::after { left: 0; right: 0; }
.ar { width: 24px; height: 24px; border-radius: 6px; background: linear-gradient(135deg, #7a1fa0, #f0047f); color: #fff; font-size: 12px; font-weight: 700; line-height: 24px; }
.badge { position: absolute; left: 27px; top: 19px; width: 16px; height: 16px; border-radius: 50%; border: 1px solid #777; background: #d8d8d8; font-size: 11px; font-weight: 400; line-height: 14px; text-align: center; }
.redb { border: 0; background: #c42b1c; color: #fff; line-height: 16px; }
.burger { border-color: #ddd; background: linear-gradient(160deg, #fff 35%, #c98b3a 35%, #5c9a2c 60%, #fff 60%); }
.photo { border-color: #443; background: radial-gradient(#b06a3a, #2c2f55 70%); }
.tray { display: flex; align-items: center; gap: 9px; margin-left: auto; height: 40px; padding-right: 4px; }
.weather { gap: 9px; margin-right: 14px; font-size: 13px; }
.lang { font-size: 12px; }
.kbd { width: 22px; height: 14px; }
.tray time { width: 66px; text-align: center; font-size: 12px; line-height: 18px; }
.notes { position: relative; width: 40px; height: 40px; border-right: 1px solid #aaa; }
.notes .badge { left: 19px; top: 18px; }
```
